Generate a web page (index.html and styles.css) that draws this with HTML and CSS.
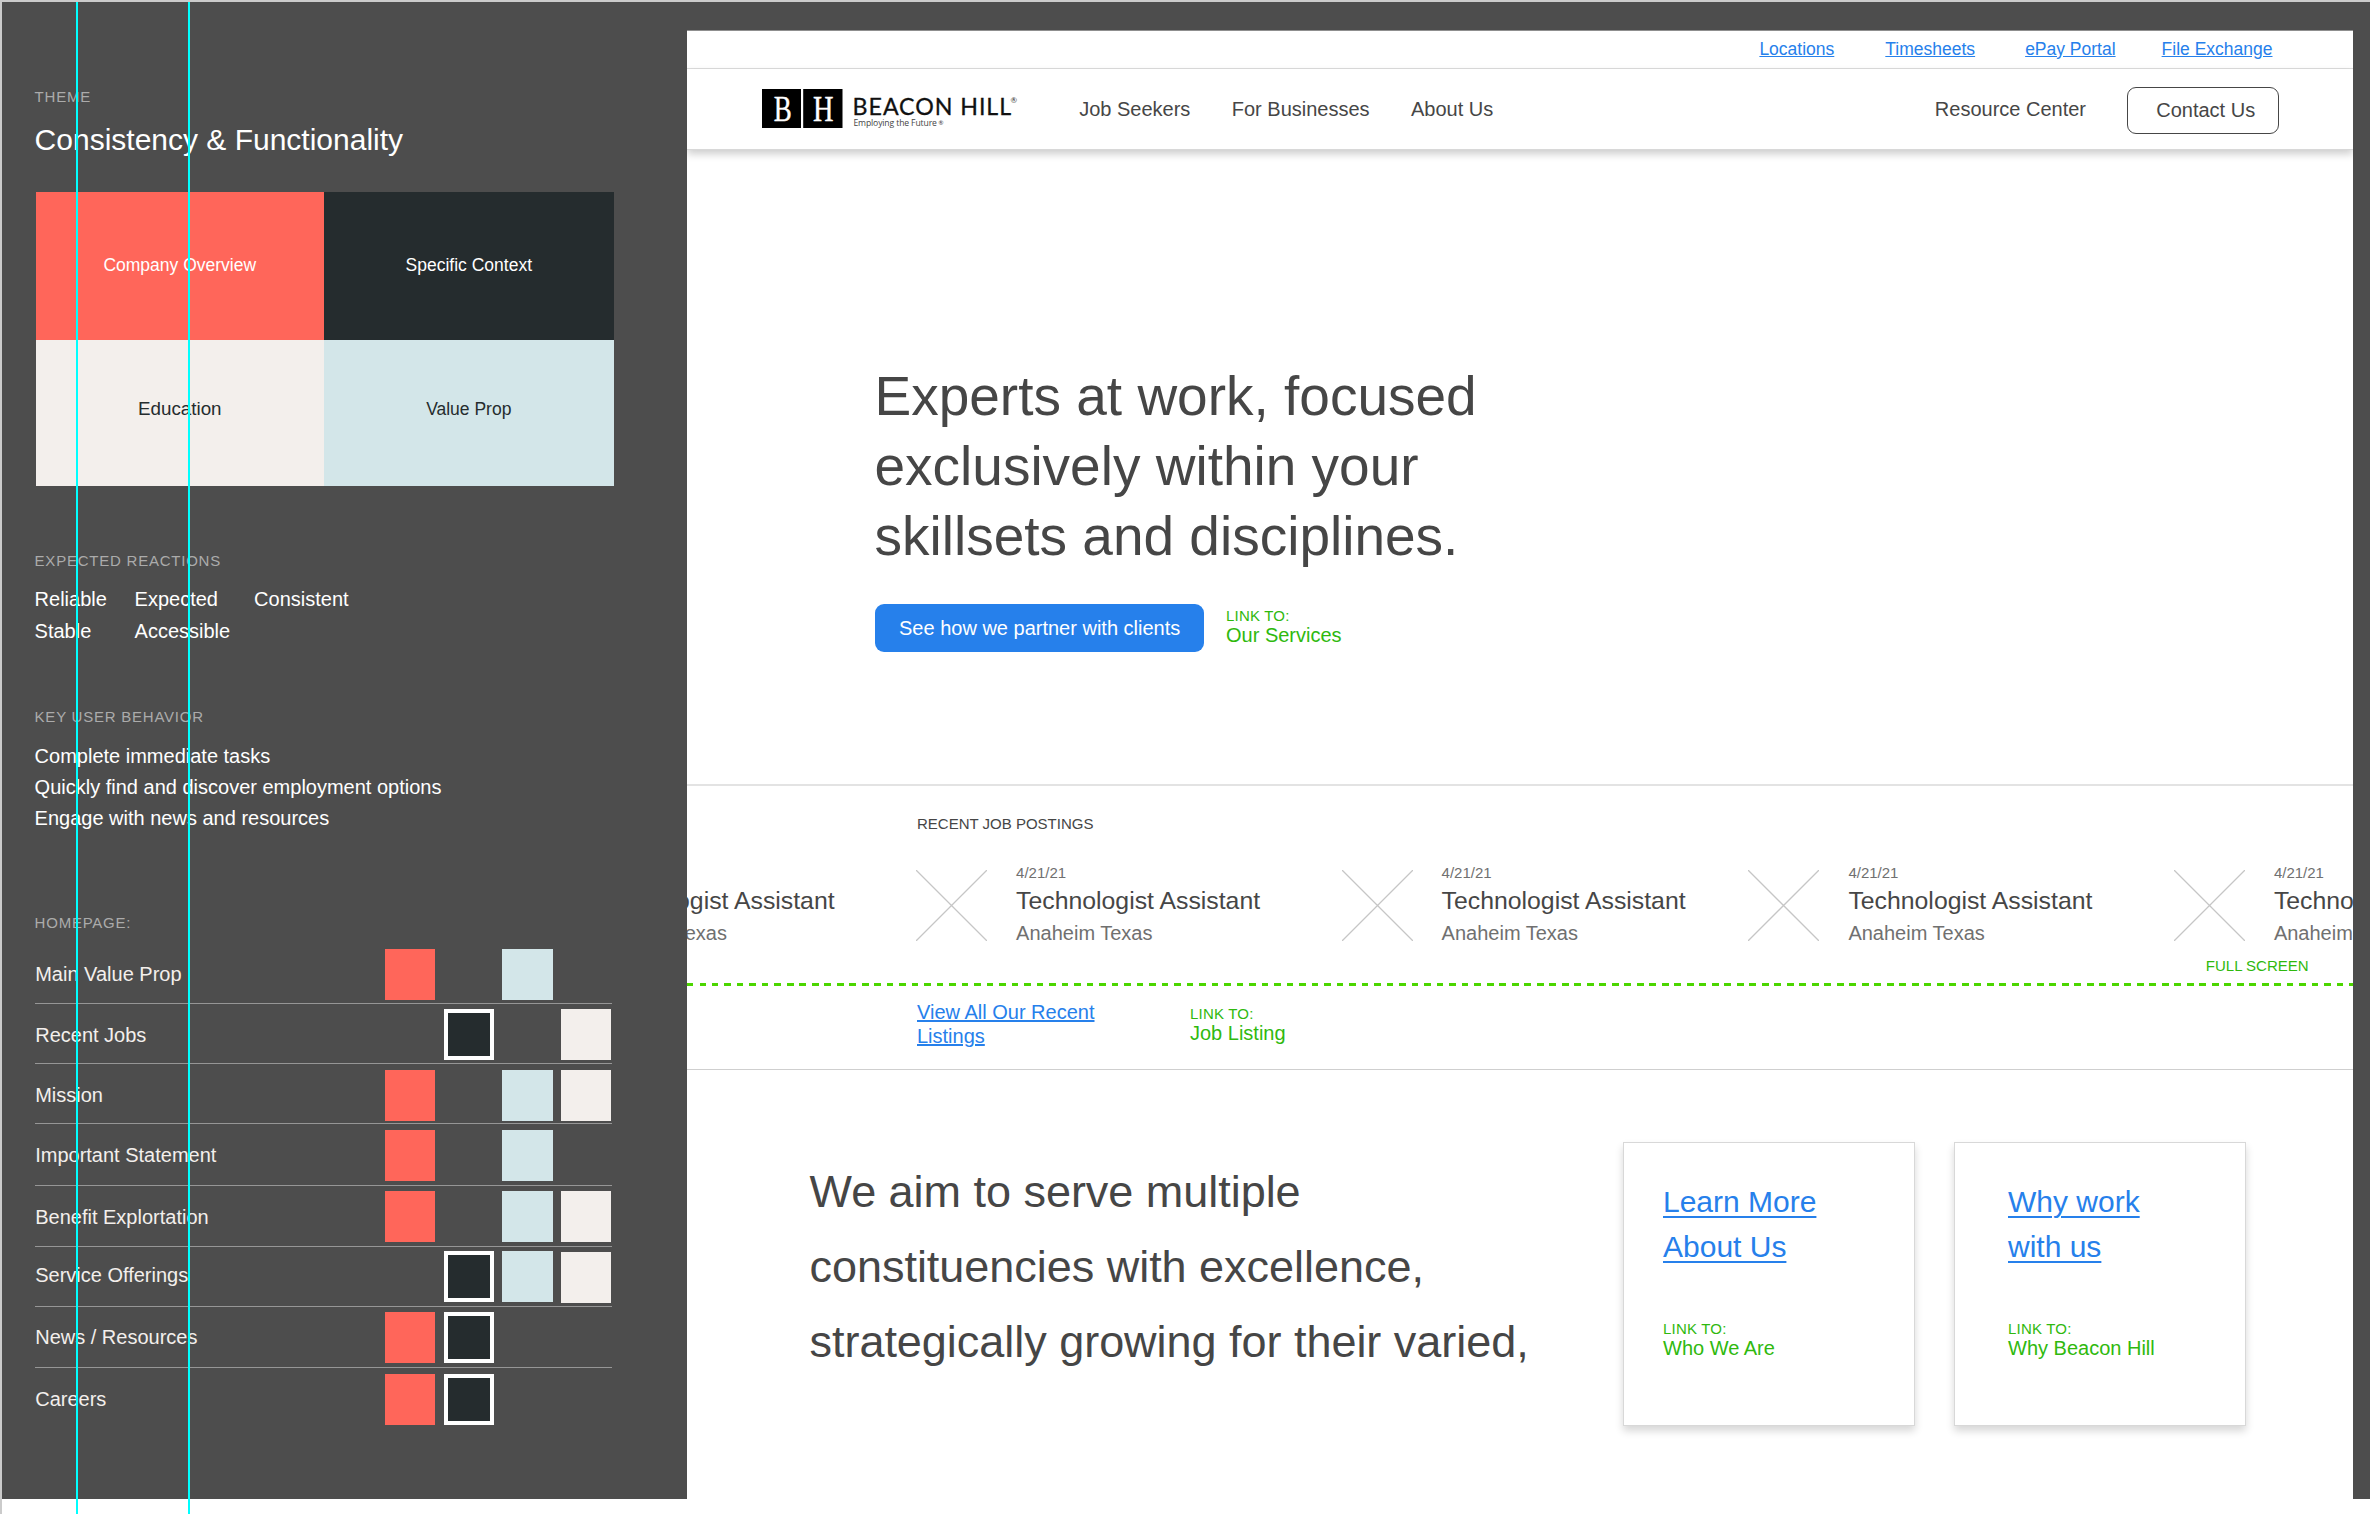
FILE: index.html
```html
<!DOCTYPE html>
<html lang="en">
<head>
<meta charset="utf-8">
<title>Beacon Hill – Homepage</title>
<link rel="stylesheet" href="styles.css">
</head>
<body>
<div class="board">
  <aside class="sidebar">
    <h2 class="label">THEME</h2>
    <p class="theme-title">Consistency &amp; Functionality</p>
    <div class="quadrants">
      <div class="quad coral">Company Overview</div>
      <div class="quad dark">Specific Context</div>
      <div class="quad cream quad-low quad-large">Education</div>
      <div class="quad ice quad-low">Value Prop</div>
    </div>

    <h2 class="label label-reactions">EXPECTED REACTIONS</h2>
    <div class="reactions">
      <span>Reliable</span><span>Expected</span><span>Consistent</span>
      <span>Stable</span><span>Accessible</span>
    </div>

    <h2 class="label label-behavior">KEY USER BEHAVIOR</h2>
    <ul class="behaviors">
      <li>Complete immediate tasks</li>
      <li>Quickly find and discover employment options</li>
      <li>Engage with news and resources</li>
    </ul>

    <h2 class="label label-homepage">HOMEPAGE:</h2>
    <ul class="matrix">
      <li><span>Main Value Prop</span><i class="swatch coral"></i><i class="swatch ice"></i></li>
      <li><span>Recent Jobs</span><i class="swatch dark"></i><i class="swatch cream"></i></li>
      <li><span>Mission</span><i class="swatch coral"></i><i class="swatch ice"></i><i class="swatch cream"></i></li>
      <li><span>Important Statement</span><i class="swatch coral"></i><i class="swatch ice"></i></li>
      <li><span>Benefit Explortation</span><i class="swatch coral"></i><i class="swatch ice"></i><i class="swatch cream"></i></li>
      <li><span>Service Offerings</span><i class="swatch dark"></i><i class="swatch ice"></i><i class="swatch cream nudged"></i></li>
      <li><span>News / Resources</span><i class="swatch coral"></i><i class="swatch dark"></i></li>
      <li><span>Careers</span><i class="swatch coral"></i><i class="swatch dark"></i></li>
    </ul>
  </aside>

  <main class="page">
    <div class="utility">
      <a href="#">Locations</a><a href="#">Timesheets</a><a href="#">ePay Portal</a><a href="#">File Exchange</a>
    </div>
    <header class="nav">
      <svg class="logo" width="260" height="46" viewBox="0 0 260 46">
        <rect x="0" y="3" width="39" height="39"/>
        <rect x="41.2" y="3" width="39.3" height="39"/>
        <g class="logo-initials">
          <text x="11.8" y="34.7" textLength="18" lengthAdjust="spacingAndGlyphs">B</text>
          <text x="51" y="34.7" textLength="20.5" lengthAdjust="spacingAndGlyphs">H</text>
        </g>
        <text class="logo-name" x="90.6" y="28.8" textLength="158.5">BEACON HILL</text>
        <text class="logo-reg" x="248.6" y="16.5">®</text>
        <text class="logo-tag" x="91.4" y="40.3" textLength="83.5">Employing the Future</text>
        <text class="logo-reg-small" x="176.5" y="39">®</text>
      </svg>
      <nav class="links">
        <a href="#">Job Seekers</a><a href="#">For Businesses</a><a href="#">About Us</a>
      </nav>
      <a class="resource" href="#">Resource Center</a>
      <a class="contact" href="#">Contact Us</a>
    </header>

    <section class="hero">
      <h1>Experts at work, focused<br>exclusively within your<br>skillsets and disciplines.</h1>
      <div class="hero-actions">
        <a class="cta" href="#">See how we partner with clients</a>
        <p class="note"><small>LINK TO:</small>Our Services</p>
      </div>
    </section>

    <section class="jobs">
      <h3>RECENT JOB POSTINGS</h3>
      <div class="track">
        <article class="job">
          <svg class="thumb" viewBox="0 0 71 71"><path d="M0 0L71 71M71 0L0 71"/></svg>
          <div><time>4/21/21</time><h4>Technologist Assistant</h4><p>Anaheim Texas</p></div>
        </article>
        <article class="job">
          <svg class="thumb" viewBox="0 0 71 71"><path d="M0 0L71 71M71 0L0 71"/></svg>
          <div><time>4/21/21</time><h4>Technologist Assistant</h4><p>Anaheim Texas</p></div>
        </article>
        <article class="job job-narrow">
          <svg class="thumb" viewBox="0 0 71 71"><path d="M0 0L71 71M71 0L0 71"/></svg>
          <div><time>4/21/21</time><h4>Technologist Assistant</h4><p>Anaheim Texas</p></div>
        </article>
        <article class="job">
          <svg class="thumb" viewBox="0 0 71 71"><path d="M0 0L71 71M71 0L0 71"/></svg>
          <div><time>4/21/21</time><h4>Technologist Assistant</h4><p>Anaheim Texas</p></div>
        </article>
        <article class="job">
          <svg class="thumb" viewBox="0 0 71 71"><path d="M0 0L71 71M71 0L0 71"/></svg>
          <div><time>4/21/21</time><h4>Technologist Assistant</h4><p>Anaheim Texas</p></div>
        </article>
      </div>
      <p class="fold-label">FULL SCREEN</p>
      <div class="fold"></div>
      <div class="jobs-more">
        <a href="#">View All Our Recent<br>Listings</a>
        <p class="note"><small>LINK TO:</small>Job Listing</p>
      </div>
    </section>

    <section class="mission">
      <p class="statement">We aim to serve multiple<br>constituencies with excellence,<br>strategically growing for their varied,</p>
      <div class="card">
        <a href="#">Learn More<br>About Us</a>
        <p class="note"><small>LINK TO:</small>Who We Are</p>
      </div>
      <div class="card card-indent">
        <a href="#">Why work<br>with us</a>
        <p class="note"><small>LINK TO:</small>Why Beacon Hill</p>
      </div>
    </section>
  </main>

  <div class="guide guide-a"></div>
  <div class="guide guide-b"></div>
</div>
</body>
</html>
```
FILE: styles.css
```css
* { box-sizing: border-box; }

body, h1, h2, h3, h4, p, ul { margin: 0; padding: 0; font-weight: 400; }

body {
  font-family: "Liberation Sans", Arial, sans-serif;
  font-size: 20px;
  line-height: 20px;
  color: #464646;
  background: #fff;
}

ul { list-style: none; }
a { color: inherit; text-decoration: none; }

.board {
  position: relative;
  display: flex;
  width: 2370px;
  height: 1514px;
  overflow: hidden;
  border-top: 2px solid #cbcbcb;
  border-left: 2px solid #cbcbcb;
  background: linear-gradient(#4d4d4d, #4d4d4d) 0 0 / 100% 1497px no-repeat #fff;
}

/* Palette */
.coral { background: #ff665a; color: #fff; }
.dark  { background: #252c2e; color: #fff; }
.cream { background: #f3efec; color: #252c2e; }
.ice   { background: #d3e6e9; color: #252c2e; }

/* Sidebar */
.sidebar {
  flex: none;
  width: 685px;
  padding: 85px 0 0 32.6px;
  color: #fff;
}

.label {
  font-size: 15px;
  line-height: 19px;
  letter-spacing: 0.77px;
  color: #ababab;
}
.label-reactions { margin-top: 65px; }
.label-behavior { margin-top: 60px; }
.label-homepage { margin-top: 79px; }

.theme-title { margin-top: 17px; font-size: 30px; line-height: 33px; }

.quadrants {
  display: grid;
  grid-template: 148px 146px / 288px 290px;
  margin: 36px 0 0 1.2px;
}
.quad {
  display: flex;
  align-items: center;
  justify-content: center;
  padding-bottom: 2px;
  font-size: 17.5px;
}
.quad-low { padding-bottom: 8px; }
.quad-large { font-size: 18.8px; }

.reactions {
  display: grid;
  grid-template-columns: 100px 119.5px 200px;
  margin-top: 13px;
  line-height: 32px;
}

.behaviors { margin-top: 15px; line-height: 31px; }

/* Rows differ slightly in height and in where their content starts */
.matrix { width: 577px; margin: 11px 0 0 0.6px; color: #f3efec; }
.matrix li {
  --row: 60px;
  --label-top: 21px;
  --swatch-top: 5px;
  display: grid;
  grid-template-columns: 350px 58.6px 58.4px 59px 50px;
  align-items: start;
  height: var(--row);
  border-bottom: 1px solid #969696;
}
.matrix li:nth-child(1) { --row: 61px; --swatch-top: 6px; }
.matrix li:nth-child(3) { --swatch-top: 6px; }
.matrix li:nth-child(4) { --row: 62px; --swatch-top: 6px; }
.matrix li:nth-child(5) { --row: 61px; }
.matrix li:nth-child(6) { --label-top: 18px; --swatch-top: 4px; }
.matrix li:nth-child(7) { --row: 61px; --label-top: 20px; }
.matrix li:nth-child(8) { --swatch-top: 6px; border-bottom: 0; }
.matrix span { margin-top: var(--label-top); }

.swatch { grid-row: 1; height: 51px; margin-top: var(--swatch-top); }
.swatch.coral { grid-column: 2; width: 50px; }
.swatch.dark { grid-column: 3; width: 50px; border: 4px solid #fff; }
.swatch.ice { grid-column: 4; width: 51px; }
.swatch.cream { grid-column: 5; width: 50px; }
.swatch.nudged { margin-top: calc(var(--swatch-top) + 1px); }

/* Page */
.page {
  flex: none;
  width: 1666px;
  margin-top: 28px;
  overflow: hidden;
  border-top: 1px solid #8f8f8f;
  background: #fff;
}

.utility {
  display: flex;
  align-items: center;
  justify-content: flex-end;
  height: 38px;
  padding: 0 80.5px 1px 0;
  border-bottom: 1px solid #dedede;
  font-size: 17.5px;
  color: #2680eb;
}
.utility a { text-decoration: underline; }
.utility a + a { margin-left: 51px; }
.utility a + a + a { margin-left: 50px; }
.utility a:last-child { margin-left: 46px; }

.nav {
  display: flex;
  align-items: center;
  height: 81px;
  padding: 0 74.4px 0 75px;
  border-bottom: 1px solid #d8d8d8;
  box-shadow: 0 4px 8px rgba(0, 0, 0, 0.2);
}
.logo { flex: none; }
.logo-initials { font-family: "Liberation Serif", serif; font-size: 35px; fill: #fff; stroke: #fff; stroke-width: 0.4px; }
.logo-name { font-family: Lato, sans-serif; font-size: 23.2px; fill: #111; stroke: #111; stroke-width: 0.3px; }
.logo-tag { font-family: "Open Sans", sans-serif; font-size: 8.6px; fill: #444; }
.logo-reg { font-family: Lato, sans-serif; font-size: 8px; fill: #333; }
.logo-reg-small { font-family: Lato, sans-serif; font-size: 6px; fill: #333; }

.links { display: flex; gap: 41.4px; margin-left: 57.2px; }
.resource { margin-left: auto; }
.contact {
  width: 152px;
  height: 47px;
  margin: 2px 0 0 40.6px;
  padding: 12px 0 0 28.6px;
  border: 1px solid #464646;
  border-radius: 9px;
}

.hero { height: 634px; padding: 211px 0 0 187.5px; }
.hero h1 { font-size: 55px; line-height: 70px; }
.hero-actions { display: flex; gap: 22px; margin-top: 33px; }
.cta {
  width: 329.5px;
  height: 48px;
  padding: 14px 0 0 24.5px;
  border-radius: 9px;
  background: #2680eb;
  color: #fff;
  white-space: nowrap;
}

.note { margin-top: 2px; color: #2fb90e; }
.note small {
  display: block;
  font-size: 15px;
  line-height: 19px;
  letter-spacing: 0.2px;
}

/* Recent jobs */
.jobs {
  height: 286px;
  padding-top: 28px;
  border-top: 2px solid #e3e3e3;
  border-bottom: 1px solid #cfcfcf;
}
.jobs h3 { margin-left: 230px; font-size: 15px; line-height: 19px; }

.track { display: flex; margin: 30px 0 0 -196.4px; }
.job { flex: none; display: flex; gap: 29px; width: 425.5px; white-space: nowrap; }
.job-narrow { width: 406.8px; }
.thumb {
  flex: none;
  width: 71px;
  height: 71px;
  margin-top: 7px;
  fill: none;
  stroke: #c6c6c6;
  stroke-width: 1.3;
}
.job time { display: block; font-size: 15px; line-height: 19px; color: #707070; }
.job h4 { margin-top: 5px; font-size: 24.8px; line-height: 28px; }
.job p { margin-top: 8px; color: #707070; }

.fold-label {
  margin: 13px 44.4px 0 0;
  font-size: 15px;
  line-height: 19px;
  text-align: right;
  color: #2fb90e;
}
.fold {
  height: 3px;
  margin-top: 8px;
  background: repeating-linear-gradient(90deg, #4cd600 0 6.5px, transparent 6.5px 12.5px);
}
.jobs-more { display: flex; margin: 14px 0 0 230px; }
.jobs-more a {
  width: 273px;
  line-height: 24px;
  color: #2680eb;
  text-decoration: underline;
}
.jobs-more .note { margin-top: 4px; }

/* Mission */
.mission { display: flex; align-items: flex-start; padding-top: 72px; }
.statement {
  width: 813.5px;
  margin: 12px 0 0 122.5px;
  font-size: 45px;
  line-height: 75px;
  letter-spacing: -0.03px;
  white-space: nowrap;
}
.card {
  flex: none;
  width: 292px;
  height: 284px;
  padding: 36px 0 0 39px;
  border: 1px solid #d8d8d8;
  box-shadow: 0 5px 8px rgba(0, 0, 0, 0.16);
}
.card a {
  display: block;
  font-size: 30px;
  line-height: 45px;
  color: #2680eb;
  text-decoration: underline;
  text-decoration-thickness: 1.5px;
  text-underline-offset: 4px;
}
.card .note { margin-top: 50px; }
.card-indent { margin-left: 39px; padding-left: 53px; }

/* Layout guides drawn over the artboard */
.guide {
  position: absolute;
  top: 0;
  bottom: 0;
  width: 2px;
  background: #0ff;
}
.guide-a { left: 74px; }
.guide-b { left: 186px; }
```
